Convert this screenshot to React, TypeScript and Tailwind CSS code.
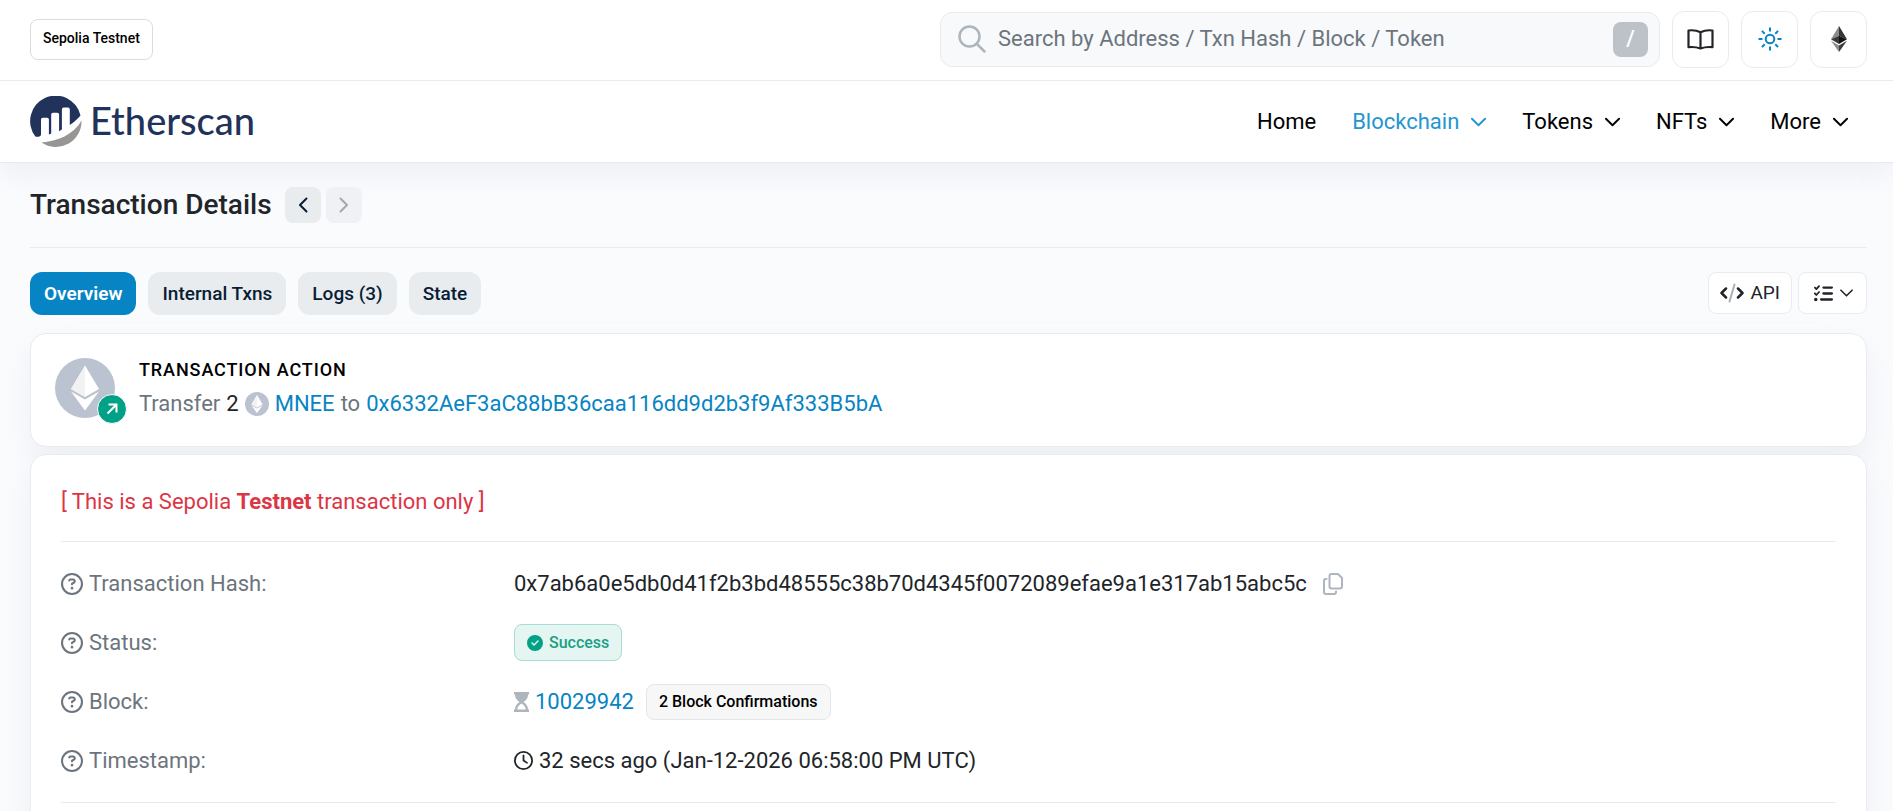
import { FaRegCircleQuestion, FaRegClock, FaCircleCheck, FaListCheck } from "react-icons/fa6";
import type { ReactNode } from "react";

const navItems = [
  { label: "Home", path: "#home", menu: false, active: false },
  { label: "Blockchain", path: "#blockchain", menu: true, active: true },
  { label: "Tokens", path: "#tokens", menu: true, active: false },
  { label: "NFTs", path: "#nfts", menu: true, active: false },
  { label: "More", path: "#more", menu: true, active: false },
];

const tabs = ["Overview", "Internal Txns", "Logs (3)", "State"];

function Chevron({ className = "", d = "M1 1.5 8 8.5 15 1.5", box = "0 0 16 10" }) {
  return (
    <svg viewBox={box} className={className} fill="none" stroke="currentColor" strokeWidth="2" strokeLinecap="round" strokeLinejoin="round" aria-hidden="true">
      <path d={d} />
    </svg>
  );
}

function Logo() {
  return (
    <svg viewBox="0 0 52 52" className="size-[52px]" aria-hidden="true">
      <path
        d="M11 38.5V23.6q0-1.8 1.8-1.8h4.3q1.8 0 1.8 1.8V38.5q1.5-.5 2.3-.9V18.500q0-1.800 1.800-1.800h4.300q1.800 0 1.800 1.800v16.800q1.700-.9 2.800-1.700V13.400q0-1.800 1.800-1.800h4.300q1.800 0 1.800 1.800V29C45 25.500 48 22.500 50.500 19.500A25.500 25.500 0 1 0 5.300 40.500q1.200.4 3.300.2 2.400-.2 2.400-2.200Z"
        fill="#21325b"
      />
      <path d="M11.500 46.500C27 45.500 44 38.500 51.500 24.500A25.600 25.600 0 0 1 11.500 46.500Z" fill="#979695" />
    </svg>
  );
}

function EthToken({ className = "" }) {
  return (
    <svg viewBox="0 0 60 60" className={className} aria-hidden="true">
      <circle cx="30" cy="30" r="30" fill="#bcc3d0" />
      <path d="M30 7.500 16 31l14 8L44 31Z" fill="#fff" />
      <path d="M30 7.500 16 31l14 8Z" fill="#f2f2f2" />
      <path d="M16 33.500l14 8 14-8L30 52.500Z" fill="#fff" />
    </svg>
  );
}

function Row({ label, children }: { label: string; children: ReactNode }) {
  return (
    <div className="flex min-h-[59px] items-center">
      <dt className="flex w-[453px] shrink-0 items-center gap-1.5 text-[#6c757d]">
        <FaRegCircleQuestion className="size-[22px]" aria-hidden="true" />
        {label}:
      </dt>
      <dd className="flex min-w-0 items-center">{children}</dd>
    </div>
  );
}

export default function App() {
  return (
    <div className="min-h-screen overflow-hidden bg-[#fafbfd] font-['Roboto',sans-serif] text-[22px] leading-8 text-[#212529]">
      <header className="bg-white shadow-[0_12px_28px_rgba(189,197,209,0.2)]">
        {/* Network, search and quick settings */}
        <div className="flex h-[81px] items-center justify-between border-b border-[#e9ecef] pr-[26px] pb-0.5 pl-[30px]">
          <a href="#network" className="rounded-lg border border-[#dcdcdd] px-3 pt-1.5 pb-[9px] text-sm leading-6 font-medium text-black">
            Sepolia Testnet
          </a>
          <div className="flex items-center gap-3">
            <form className="flex h-[55px] w-[720px] items-center rounded-xl border border-[#e9ecef] bg-[#f8f9fb] pr-[11px] pl-[17px]">
              <svg viewBox="0 0 28 28" className="size-7 shrink-0" fill="none" stroke="#adb5bd" strokeWidth="2.500" strokeLinecap="round" aria-hidden="true">
                <circle cx="11.500" cy="11.500" r="10" />
                <path d="m19 19 7.500 7.500" />
              </svg>
              <input
                type="text"
                aria-label="Search"
                placeholder="Search by Address / Txn Hash / Block / Token"
                className="ml-3 min-w-0 flex-1 bg-transparent outline-none placeholder:text-[#6c757d]"
              />
              <kbd className="flex size-[35px] shrink-0 items-center justify-center rounded-lg bg-[#bdc2c9] font-['Roboto',sans-serif] text-[22px] font-medium text-white">/</kbd>
            </form>
            <button type="button" aria-label="Documentation" className="flex size-[57px] items-center justify-center rounded-xl border border-[#e9ecef]">
              <svg viewBox="0 0 27 21" className="h-[21px] w-[27px]" fill="none" stroke="#212529" strokeWidth="2.200" strokeLinejoin="round" aria-hidden="true">
                <path d="M13.500 3.300Q8 .5 1.500 1.500v16.700q6.500-.7 12 1.300 5.500-2 12-1.300V1.500Q19 .5 13.500 3.300ZM13.500 3.300v16.200" />
              </svg>
            </button>
            <button type="button" aria-label="Theme" className="flex size-[57px] items-center justify-center rounded-xl border border-[#e9ecef]">
              <svg viewBox="0 0 24 24" className="size-6" fill="none" stroke="#0784c3" strokeWidth="2" aria-hidden="true">
                <circle cx="12" cy="12" r="4.300" />
                <path d="M12 .5v4M12 19.500v4M.5 12h4M19.500 12h4M3.900 3.900l2.800 2.800M17.300 17.300l2.800 2.800M3.900 20.100l2.800-2.800M17.300 6.700l2.800-2.800" />
              </svg>
            </button>
            <button type="button" aria-label="Networks" className="flex size-[57px] items-center justify-center rounded-xl border border-[#e9ecef]">
              <svg viewBox="0 0 16 26" className="h-[26px] w-4" aria-hidden="true">
                <path d="M8 0 0 13.300 8 9.700Z" fill="#8c8c8c" />
                <path d="M8 0v9.700l8 3.600Z" fill="#343434" />
                <path d="M0 13.300 8 18V9.700Z" fill="#393939" />
                <path d="m16 13.300-8 4.700V9.700Z" fill="#141414" />
                <path d="m0 14.800 8 11.200v-6.500Z" fill="#8c8c8c" />
                <path d="M16 14.800 8 26v-6.500Z" fill="#3c3c3b" />
              </svg>
            </button>
          </div>
        </div>

        {/* Brand and navigation */}
        <div className="flex h-[82px] items-center justify-between border-b border-[#e7eaf0] pr-[45px] pl-[30px]">
          <a href="#home" className="flex items-center gap-2 font-['Lato',sans-serif] text-[38px] font-medium text-[#21325b]">
            <Logo />
            <span className="pb-1">Etherscan</span>
          </a>
          <nav className="flex items-center gap-9 text-black">
            {navItems.map((item) => (
              <a key={item.label} href={item.path} className={item.active ? "flex items-center gap-3 text-[#2596d0]" : "flex items-center gap-3"}>
                {item.label}
                {item.menu && <Chevron className="h-2.5 w-[15px]" />}
              </a>
            ))}
          </nav>
        </div>
      </header>

      <main className="pr-[26px] pl-[30px]">
        <div className="flex h-[85px] items-center gap-[5px] border-b border-[#e9ecef]">
          <h1 className="mr-2 text-[28px] font-medium">Transaction Details</h1>
          <button type="button" aria-label="Previous" className="flex size-9 items-center justify-center rounded-lg bg-[#e9ecef] text-[#081d35]">
            <Chevron className="h-4 w-2.5" box="0 0 10 16" d="M8.500 1.500 2 8l6.500 6.500" />
          </button>
          <button type="button" aria-label="Next" disabled className="flex size-9 items-center justify-center rounded-lg bg-[#eff1f4] text-[#a4a9af]">
            <Chevron className="h-4 w-2.5" box="0 0 10 16" d="M1.500 1.500 8 8l-6.500 6.500" />
          </button>
        </div>

        <div className="flex items-start justify-between pt-6 pb-[18px]">
          <div className="flex gap-3 text-[19px] font-medium">
            {tabs.map((tab, i) => (
              <button
                key={tab}
                type="button"
                className={
                  i === 0
                    ? "h-[43px] rounded-xl bg-[#0784c3] px-3.5 font-semibold text-white"
                    : "h-[43px] rounded-xl bg-[#e9ecef] px-3.5 text-[#081d35]"
                }
              >
                {tab}
              </button>
            ))}
          </div>
          <div className="flex gap-1.5 text-[19px]">
            <a href="#api" className="flex h-[42px] items-center gap-1.5 rounded-lg border border-[#e9ecef] bg-white px-[11px]">
              <svg viewBox="0 0 24 20" className="h-5 w-6" fill="none" stroke="currentColor" strokeWidth="2.500" strokeLinecap="round" strokeLinejoin="round" aria-hidden="true">
                <path d="M6 5.500 1.500 10 6 14.500M18 5.500l4.500 4.500-4.500 4.500" />
                <path d="M14.500 1.500 9.500 18.500" stroke="#adb0b3" strokeWidth="2" />
              </svg>
              API
            </a>
            <button type="button" aria-label="More options" className="flex h-[42px] items-center gap-[7px] rounded-lg border border-[#e9ecef] bg-white pr-[13px] pl-[15px]">
              <FaListCheck className="size-[19px]" aria-hidden="true" />
              <Chevron className="h-2 w-[13px]" />
            </button>
          </div>
        </div>

        {/* Action summary */}
        <section className="flex items-start rounded-2xl border border-[#e9ecef] bg-white pl-6 shadow-[0_12px_28px_rgba(189,197,209,0.2)]">
          <div className="relative mt-6 mr-6 size-[60px]">
            <EthToken className="size-[60px]" />
            <span className="absolute -right-3 -bottom-1.5 flex size-[30px] items-center justify-center rounded-full border border-white bg-[#00a186]">
              <svg viewBox="0 0 12 12" className="size-3" fill="none" stroke="#fff" strokeWidth="2" aria-hidden="true">
                <path d="M2.500 1.500h8v8M10.500 1.500l-9 9" />
              </svg>
            </span>
          </div>
          <div className="pt-5 pb-[26px]">
            <h2 className="mb-0.5 text-lg/8 font-medium tracking-wider text-black">TRANSACTION ACTION</h2>
            <p className="flex items-center gap-1.5">
              <span className="text-[#6c757d]">Transfer</span>
              <span>2</span>
              <EthToken className="size-6" />
              <a href="#mnee" className="text-[#0784c3]">MNEE</a>
              <span className="text-[#6c757d]">to</span>
              <a href="#address" className="text-[#0784c3]">0x6332AeF3aC88bB36caa116dd9d2b3f9Af333B5bA</a>
            </p>
          </div>
        </section>

        {/* Details */}
        <section className="mt-[7px] rounded-2xl border border-[#e9ecef] bg-white px-[30px] pb-[60px] shadow-[0_12px_28px_rgba(189,197,209,0.2)]">
          <p className="border-b border-[#e9ecef] pt-[31px] pb-[23px] text-[#dc3545]">
            [ This is a Sepolia <strong className="font-bold">Testnet</strong> transaction only ]
          </p>
          <dl className="border-b border-[#e9ecef] py-3">
            <Row label="Transaction Hash">
              0x7ab6a0e5db0d41f2b3bd48555c38b70d4345f0072089efae9a1e317ab15abc5c
              <button type="button" aria-label="Copy" className="ml-4 text-[#adb5bd]">
                <svg viewBox="0 0 20 22" className="h-[22px] w-5" fill="none" stroke="currentColor" strokeWidth="2" strokeLinecap="round" strokeLinejoin="round" aria-hidden="true">
                  <path d="M8.500 1h6.500l4 4v8.500q0 2-2 2H8.500q-2 0-2-2V3q0-2 2-2Z" />
                  <path d="M3.500 6H3Q1 6 1 8v11q0 2 2 2h8q2 0 2-2v-.5" />
                </svg>
              </button>
            </Row>
            <Row label="Status">
              <span className="flex h-[37px] items-center gap-1.5 rounded-lg border border-[#a6ddd4] bg-[#e5f5f2] px-3 text-base font-medium text-[#1a9e84]">
                <FaCircleCheck className="size-4 text-[#00a186]" aria-hidden="true" />
                Success
              </span>
            </Row>
            <Row label="Block">
              <svg viewBox="0 0 15 20" className="mr-1.5 h-5 w-[15px]" fill="#adb5bd" aria-hidden="true">
                <path d="M0 0h15v2.500h-1Q14 7 9.500 10 14 13 14 17.500h1V20H0v-2.500h1Q1 13 5.500 10 1 7 1 2.500H0ZM7.500 11.500Q3.500 14 3.200 17.500h8.600Q11.500 14 7.500 11.500Z" />
              </svg>
              <a href="#block" className="text-[#0784c3]">10029942</a>
              <span className="ml-3 flex h-9 items-center rounded-lg border border-[#e4e5e7] bg-[#f7f7f7] px-3 text-base font-medium text-black">2 Block Confirmations</span>
            </Row>
            <Row label="Timestamp">
              <FaRegClock className="mr-1.5 size-[19px]" aria-hidden="true" />
              32 secs ago (Jan-12-2026 06:58:00 PM UTC)
            </Row>
          </dl>
        </section>
      </main>
    </div>
  );
}
